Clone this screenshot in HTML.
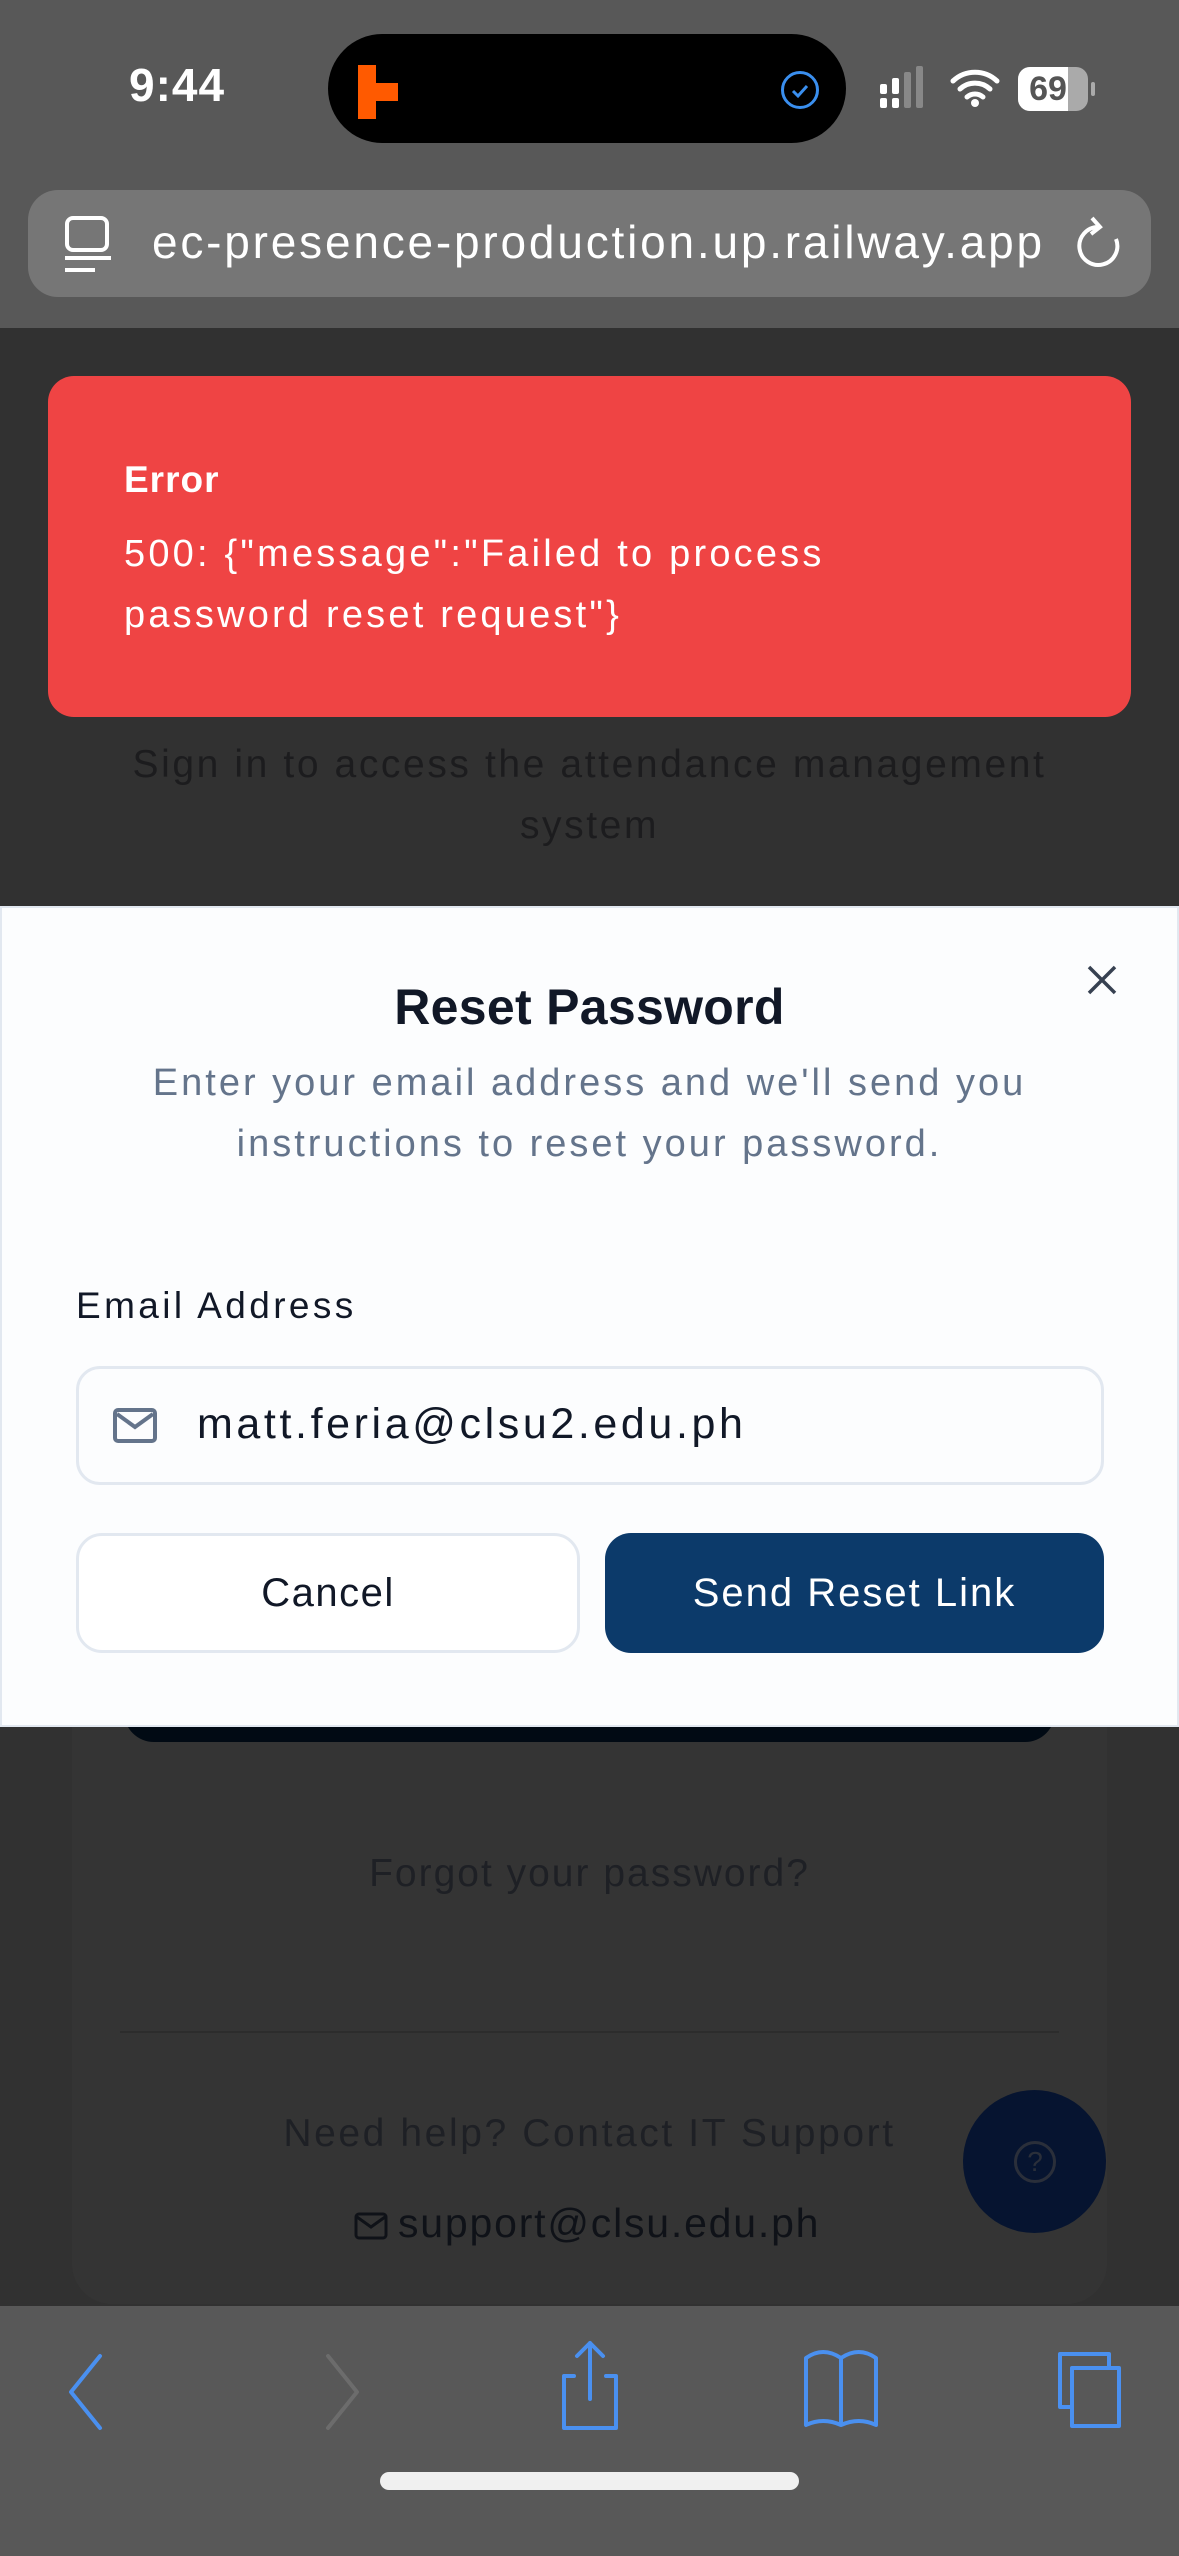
<!DOCTYPE html>
<html><head><meta charset="utf-8"><style>
*{margin:0;padding:0;box-sizing:border-box}
body{width:1179px;height:2556px;position:relative;overflow:hidden;background:#313131;font-family:"Liberation Sans",sans-serif}
.abs{position:absolute}
.c{text-align:center;left:0;width:1179px}
</style></head><body>
<!-- top chrome -->
<div class="abs" style="left:0;top:0;width:1179px;height:328px;background:#585858"></div>
<div class="abs" style="left:129px;top:58px;font-size:46px;font-weight:bold;color:#fff;letter-spacing:1px">9:44</div>
<div class="abs" style="left:328px;top:34px;width:518px;height:109px;border-radius:55px;background:#000"></div>
<div class="abs" style="left:358px;top:65px;width:18px;height:18px;background:#ff5a00"></div>
<div class="abs" style="left:358px;top:83px;width:40px;height:18px;background:#ff5a00"></div>
<div class="abs" style="left:358px;top:101px;width:18px;height:18px;background:#ff5a00"></div>
<div class="abs" style="left:781px;top:71px;width:38px;height:38px;border:3px solid #3a8fef;border-radius:50%"></div>
<svg class="abs" style="left:787px;top:79px" width="26" height="22"><path d="M6 12l5 5 9-10" stroke="#3a8fef" stroke-width="3" fill="none"/></svg>
<svg class="abs" style="left:878px;top:64px" width="60" height="60"><rect x="2" y="20" width="7" height="10" rx="2" fill="#fff"/><rect x="14" y="14" width="7" height="16" rx="2" fill="#fff"/><rect x="2" y="34" width="7" height="10" rx="2" fill="#fff"/><rect x="14" y="34" width="7" height="10" rx="2" fill="#fff"/><rect x="26" y="8" width="7" height="36" rx="2" fill="#888"/><rect x="38" y="2" width="7" height="42" rx="2" fill="#888"/></svg>
<svg class="abs" style="left:950px;top:66px" width="50" height="42"><path d="M3 15a32 32 0 0 1 44 0M10 23a22 22 0 0 1 30 0M17 31a12 12 0 0 1 16 0" stroke="#fff" stroke-width="5" fill="none" stroke-linecap="round"/><circle cx="25" cy="37" r="4" fill="#fff"/></svg>
<div class="abs" style="left:1018px;top:67px;width:70px;height:44px;border-radius:12px;background:#aaa;overflow:hidden"><div style="width:50px;height:44px;background:#fff"></div></div>
<div class="abs" style="left:1018px;top:67px;width:70px;height:44px;font-size:34px;font-weight:bold;color:#555;text-align:center;line-height:44px;padding-right:10px">69</div>
<div class="abs" style="left:1091px;top:82px;width:4px;height:14px;background:#aaa;border-radius:2px"></div>
<div class="abs" style="left:28px;top:190px;width:1123px;height:107px;border-radius:30px;background:#767676"></div>
<svg class="abs" style="left:62px;top:212px" width="52" height="64"><rect x="5" y="6" width="40" height="32" rx="6" stroke="#fff" stroke-width="4" fill="none"/><path d="M3 46h46M3 58h30" stroke="#fff" stroke-width="4"/></svg>
<div class="abs" style="left:152px;top:215px;font-size:46px;color:#fff;white-space:nowrap;letter-spacing:2.8px">ec-presence-production.up.railway.app</div>
<svg class="abs" style="left:1070px;top:213px" width="58" height="60"><path d="M28 14a19 19 0 1 0 18 12" stroke="#fff" stroke-width="4" fill="none"/><path d="M22 5l8 9-9 7" stroke="#fff" stroke-width="4" fill="none"/></svg>
<!-- background page -->
<div class="abs c" style="top:734px;font-size:39px;color:#1c1c1e;line-height:61px;letter-spacing:2.6px">Sign in to access the attendance management<br>system</div>
<div class="abs" style="left:72px;top:1600px;width:1035px;height:704px;background:#343434;border-radius:0 0 40px 40px"></div>
<div class="abs" style="left:124px;top:1700px;width:931px;height:42px;background:#010a14;border-radius:0 0 30px 30px"></div>
<div class="abs c" style="top:1852px;font-size:39px;color:#1e2025;letter-spacing:2px">Forgot your password?</div>
<div class="abs" style="left:120px;top:2031px;width:939px;height:2px;background:#2c2c2c"></div>
<div class="abs c" style="top:2112px;font-size:39px;color:#1e2025;letter-spacing:2.6px">Need help? Contact IT Support</div>
<div class="abs" style="left:354px;top:2200px;font-size:41px;color:#0f1218;white-space:nowrap;letter-spacing:1.8px"><svg width="34" height="28" style="vertical-align:middle;margin-right:10px"><rect x="2" y="2" width="30" height="24" rx="3" stroke="#0f1218" stroke-width="3" fill="none"/><path d="M3 5l14 10 14-10" stroke="#0f1218" stroke-width="3" fill="none"/></svg>support@clsu.edu.ph</div>
<div class="abs" style="left:963px;top:2090px;width:143px;height:143px;border-radius:50%;background:#061430"></div>
<div class="abs" style="left:1014px;top:2141px;width:42px;height:42px;border-radius:50%;border:3px solid #2a2f3a;color:#2a2f3a;font-size:28px;text-align:center;line-height:36px">?</div>
<!-- toast -->
<div class="abs" style="left:48px;top:376px;width:1083px;height:341px;border-radius:26px;background:#ef4444"></div>
<div class="abs" style="left:124px;top:459px;font-size:37px;font-weight:bold;color:#fff;letter-spacing:1px">Error</div>
<div class="abs" style="left:124px;top:524px;font-size:38px;color:#fff;line-height:61px;letter-spacing:3.2px">500: {"message":"Failed to process<br>password reset request"}</div>
<!-- modal -->
<div class="abs" style="left:0;top:906px;width:1179px;height:821px;background:#fcfdfe;border:2px solid #e2e8f0"></div>
<svg class="abs" style="left:1086px;top:964px" width="32" height="32"><path d="M3 3l26 26M29 3L3 29" stroke="#374151" stroke-width="3.5"/></svg>
<div class="abs c" style="top:978px;font-size:50px;font-weight:bold;color:#111827;letter-spacing:0.3px">Reset Password</div>
<div class="abs c" style="top:1053px;font-size:38px;color:#64748b;line-height:61px;letter-spacing:3px">Enter your email address and we'll send you<br>instructions to reset your password.</div>
<div class="abs" style="left:76px;top:1285px;font-size:37px;color:#111827;letter-spacing:3.4px">Email Address</div>
<div class="abs" style="left:76px;top:1366px;width:1028px;height:119px;border:3px solid #e2e8f0;border-radius:24px;background:#fcfdfe"></div>
<div class="abs" style="left:113px;top:1408px;width:44px;height:35px;border:4px solid #64748b;border-radius:5px"></div>
<svg class="abs" style="left:113px;top:1408px" width="44" height="35"><path d="M4 6l18 13 18-13" stroke="#64748b" stroke-width="4" fill="none"/></svg>
<div class="abs" style="left:197px;top:1400px;font-size:43px;color:#111827;letter-spacing:3.6px">matt.feria@clsu2.edu.ph</div>
<div class="abs" style="left:76px;top:1533px;width:504px;height:120px;border:3px solid #e2e8f0;border-radius:26px;background:#fff;font-size:40px;color:#111827;text-align:center;line-height:114px;letter-spacing:1.5px">Cancel</div>
<div class="abs" style="left:605px;top:1533px;width:499px;height:120px;border-radius:26px;background:#0c3a6a;font-size:40px;color:#fff;text-align:center;line-height:120px;letter-spacing:2px">Send Reset Link</div>
<!-- bottom bar -->
<div class="abs" style="left:0;top:2306px;width:1179px;height:250px;background:#585858"></div>
<svg class="abs" style="left:0;top:2340px" width="1179" height="100"><g fill="none" stroke-width="4" stroke-linecap="round" stroke-linejoin="round">
<path d="M100 16L71 52l29 36" stroke="#4a90f0"/>
<path d="M328 16l29 36-29 36" stroke="#6c6c6c"/>
<path d="M574 36h-10v52h52V36h-10M590 3v56M577 16l13-13 13 13" stroke="#4a90f0"/>
<path d="M806 85V18q17-12 35 0q18-12 35 0v67q-17-8-35 0q-18-8-35 0zM841 18v67" stroke="#4a90f0"/>
<path d="M1072 67h-12V14h49v12M1072 28h47v58h-47z" stroke="#4a90f0"/></g></svg>
<div class="abs" style="left:380px;top:2472px;width:419px;height:18px;border-radius:9px;background:#f0f0f0"></div>
</body></html>
